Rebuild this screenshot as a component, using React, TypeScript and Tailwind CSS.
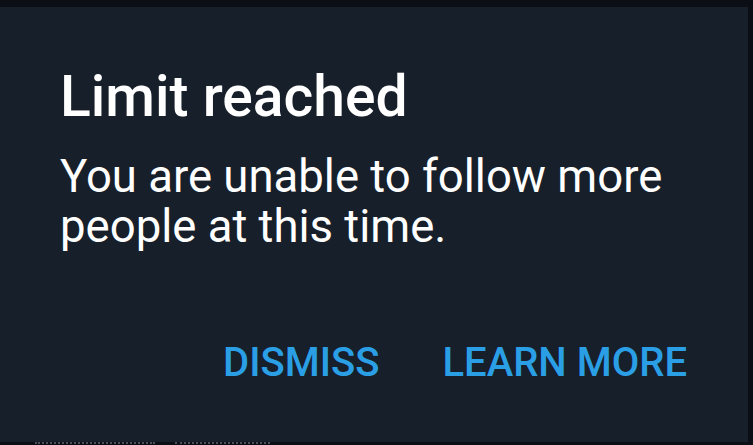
export default function App() {
  return (
    <div className="w-[753px] h-[445px] bg-[#0b0f15] pt-[7px] overflow-hidden" style={{ fontFamily: "Roboto, 'Liberation Sans', sans-serif" }}>
      <div className="w-[748px] h-[435px] bg-[#17202a] pl-[60px] pr-[61px] pt-[61px]">
        <h2 className="text-[57px] leading-[57px] font-medium text-white">Limit reached</h2>
        <p className="mt-[27px] text-[45.5px] leading-[50px] text-white">
          You are unable to follow more people at this time.
        </p>
        <div className="mt-[90px] flex justify-end gap-[63px]">
          <button className="text-[40px] leading-[41px] font-medium text-[#2b9fe6]">DISMISS</button>
          <button className="text-[40px] leading-[41px] font-medium text-[#2b9fe6]">LEARN MORE</button>
        </div>
      </div>
      <div className="h-[3px] overflow-hidden flex gap-[20px] pl-[35px]">
        <div className="w-[120px] h-[3px] border-t-2 border-dotted border-[#4a525c]" />
        <div className="w-[95px] h-[3px] border-t-2 border-dotted border-[#4a525c]" />
      </div>
    </div>
  );
}
